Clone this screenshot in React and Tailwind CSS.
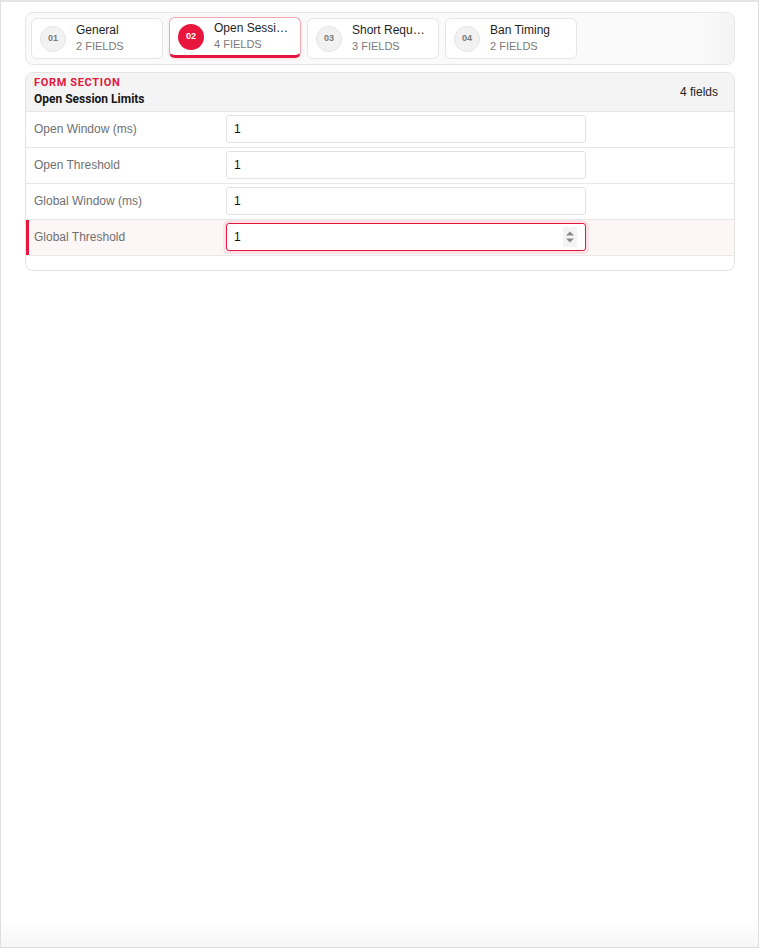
import React from "react";

const tabs = [
  { n: "01", title: "General", sub: "2 FIELDS" },
  { n: "02", title: "Open Session Limits", sub: "4 FIELDS", active: true },
  { n: "03", title: "Short Request Limits", sub: "3 FIELDS" },
  { n: "04", title: "Ban Timing", sub: "2 FIELDS" },
];

const rows = [
  { label: "Open Window (ms)", value: "1" },
  { label: "Open Threshold", value: "1" },
  { label: "Global Window (ms)", value: "1" },
  { label: "Global Threshold", value: "1", active: true },
];

function Tab({ t }) {
  return (
    <div
      className={
        t.active
          ? "w-[132px] h-[41px] shrink-0 rounded-[6px] border border-[#f3a7b2] border-b-[3px] border-b-[#e3163d] bg-white flex items-center pl-[8px] gap-[10px] -translate-y-px shadow-[0_1px_3px_rgba(225,29,72,0.15)]"
          : "w-[132px] h-[41px] shrink-0 rounded-[6px] border border-[#e6e6e6] bg-white flex items-center pl-[8px] gap-[10px]"
      }
    >
      <div
        className={
          t.active
            ? "w-[26px] h-[26px] shrink-0 rounded-full bg-[#e8163d] text-white text-[9px] font-bold flex items-center justify-center"
            : "w-[26px] h-[26px] shrink-0 rounded-full bg-[#f2f2f2] border border-[#e4e4e4] text-[#7a7a7a] text-[9px] font-bold flex items-center justify-center"
        }
      >
        {t.n}
      </div>
      <div className="min-w-0 flex-1 pr-[10px] -mt-px">
        <div className="text-[12px] leading-[14px] text-[#1f1f1f] truncate">{t.title}</div>
        <div className="text-[11px] leading-[13px] text-[#7a7a7a] mt-[3px]">{t.sub}</div>
      </div>
    </div>
  );
}

function Spinner() {
  return (
    <div className="w-[14px] h-[20px] bg-[#f4f4f4] flex items-center justify-center">
      <svg width="10" height="14" viewBox="0 0 10 14">
        <path d="M1 5.5 L5 1.5 L9 5.5 Z" fill="#8a8a8a" />
        <path d="M1 8.5 L5 12.5 L9 8.5 Z" fill="#8a8a8a" />
      </svg>
    </div>
  );
}

function Row({ r }) {
  return (
    <div
      className={
        r.active
          ? "flex items-center h-[36px] border-b border-[#e8e8e8] bg-[#fdf6f6] shadow-[inset_3px_0_0_#e3163d]"
          : "flex items-center h-[36px] border-b border-[#e8e8e8]"
      }
    >
      <div className="w-[200px] shrink-0 pl-[8px] text-[12px] text-[#707070] -mt-px">{r.label}</div>
      <div
        className={
          r.active
            ? "w-[360px] h-[28px] -mt-px rounded-[3px] border border-[#e3163d] ring-[3px] ring-[#fde1e6] bg-white flex items-center pl-[7px] pr-[8px] text-[12px] text-[#111]"
            : "w-[360px] h-[28px] -mt-px rounded-[3px] border border-[#e2e2e2] bg-white flex items-center pl-[7px] pr-[8px] text-[12px] text-[#111]"
        }
      >
        <span className="flex-1">{r.value}</span>
        {r.active && <Spinner />}
      </div>
    </div>
  );
}

export default function App() {
  return (
    <div
      className="w-[759px] h-[948px] border border-[#dedede] border-t-2 border-t-[#e4e4e4] bg-[linear-gradient(180deg,#ffffff_97%,#f6f6f6_100%)] pt-[10px] pl-[24px] pr-[23px]"
      style={{ fontFamily: '"Liberation Sans", Arial, sans-serif' }}
    >
      <div className="relative rounded-[8px] border border-[#e6e6e6] bg-[#fafafa] p-[5px] flex gap-[6px] overflow-hidden">
        {tabs.map((t) => (
          <Tab key={t.n} t={t} />
        ))}
        <div className="pointer-events-none absolute right-0 top-0 bottom-0 w-[36px] bg-[linear-gradient(90deg,rgba(250,250,250,0),#f4f4f4)]" />
      </div>

      <div className="mt-[7px] rounded-[8px] border border-[#e4e4e4] overflow-hidden pb-[14px] bg-white">
        <div className="bg-[#f4f4f4] border-b border-[#e6e6e6] flex items-center justify-between pl-[8px] pr-[16px] pt-[3px] pb-[4px]">
          <div style={{ fontFamily: 'Roboto, "Liberation Sans", sans-serif' }}>
            <div className="text-[11px] leading-[13px] font-bold text-[#e3163d] tracking-[0.06em] uppercase">
              Form Section
            </div>
            <div className="text-[12px] leading-[16px] font-bold text-[#161616] mt-[2px]">
              Open Session Limits
            </div>
          </div>
          <div className="text-[12px] text-[#222]">4 fields</div>
        </div>
        {rows.map((r) => (
          <Row key={r.label} r={r} />
        ))}
      </div>
    </div>
  );
}
